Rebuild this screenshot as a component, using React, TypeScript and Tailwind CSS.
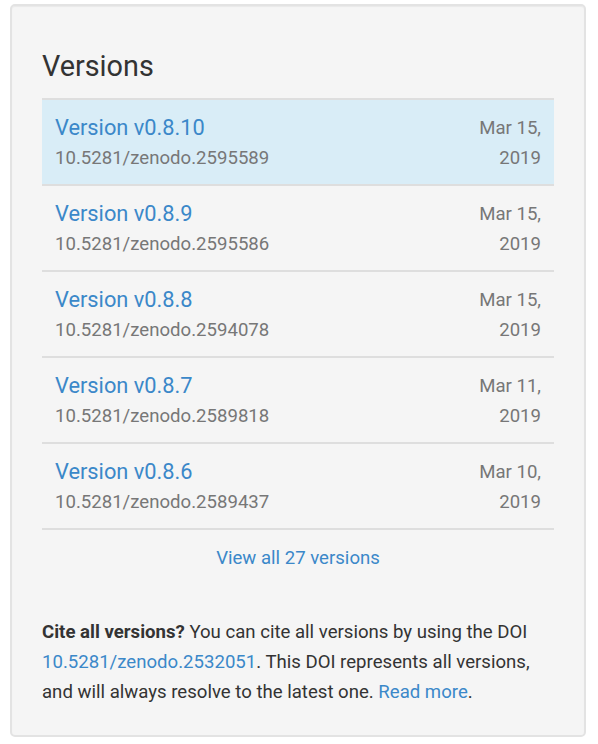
const versions = [
  { name: "Version v0.8.10", doi: "10.5281/zenodo.2595589", date: "Mar 15, 2019", active: true },
  { name: "Version v0.8.9", doi: "10.5281/zenodo.2595586", date: "Mar 15, 2019" },
  { name: "Version v0.8.8", doi: "10.5281/zenodo.2594078", date: "Mar 15, 2019" },
  { name: "Version v0.8.7", doi: "10.5281/zenodo.2589818", date: "Mar 11, 2019" },
  { name: "Version v0.8.6", doi: "10.5281/zenodo.2589437", date: "Mar 10, 2019" },
];

export default function App() {
  return (
    <div className="min-h-[744px] bg-white pl-[10px] pt-[4px] font-['Roboto',sans-serif]">
      <div className="w-[576px] rounded-[5px] border-2 border-[#e3e3e3] bg-[#f5f5f5] px-[30px] pt-[45px] pb-[28px] shadow-[inset_0_1px_1px_rgba(0,0,0,0.05)]">
        <h2 className="mb-[16px] text-[28.8px] leading-[31px] font-normal text-[#333]">Versions</h2>

        {/* Versions table */}
        <div className="border-t-2 border-[#dedede]">
          {versions.map((v) => (
            <div
              key={v.doi}
              className={`flex justify-between border-b-2 border-[#dedede] px-[13px] pt-[13px] pb-[11px] ${v.active ? "bg-[#d9edf7]" : ""}`}
            >
              <div>
                <a className="block text-[21.8px] leading-[30px] text-[#3b88c9]">{v.name}</a>
                <div className="text-[18.6px] leading-[30px] text-[#777]">{v.doi}</div>
              </div>
              <div className="max-w-[72px] text-right text-[18.6px] leading-[30px] text-[#777]">{v.date}</div>
            </div>
          ))}
        </div>

        <div className="mt-[13px] text-center text-[18.6px] leading-[30px]">
          <a className="text-[#3b88c9]">View all 27 versions</a>
        </div>

        <p className="mt-[45px] text-[18.6px] leading-[29.8px] text-[#333]">
          <strong className="font-bold">Cite all versions?</strong> You can cite all versions by using the DOI{" "}
          <a className="text-[#3b88c9]">10.5281/zenodo.2532051</a>. This DOI represents all versions, and will always
          resolve to the latest one. <a className="text-[#3b88c9]">Read more</a>.
        </p>
      </div>
    </div>
  );
}
